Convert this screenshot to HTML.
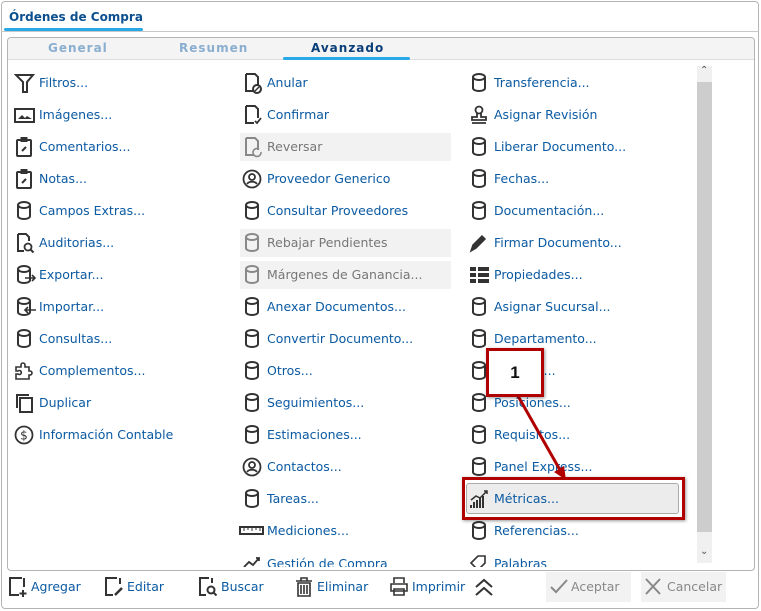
<!DOCTYPE html>
<html><head><meta charset="utf-8"><style>
*{margin:0;padding:0;box-sizing:border-box}
body{width:761px;height:611px;background:#fff;font-family:"DejaVu Sans","Liberation Sans",sans-serif;font-size:12.5px;color:#0b5aa2;position:relative;overflow:hidden}
.abs{position:absolute}
.outer{left:1px;top:1px;width:758px;height:608px;border:1px solid #b4b4b4;border-radius:4px;background:#fff}
.inner{left:7px;top:37px;width:748px;height:534px;border:1px solid #b4b4b4;border-radius:4px;overflow:hidden}
.it{position:absolute;height:22px;line-height:22px;white-space:nowrap;margin-top:0px}
.it svg{position:absolute;left:-1px;top:0}
.it span{position:absolute;left:24px;top:0}
.dis{background:#f2f2f2}
.dis span{color:#777}
.tb{position:absolute;top:576px;height:22px;line-height:22px;white-space:nowrap}
.tb span{position:absolute;left:23px}
</style></head><body>
<svg width="0" height="0" style="position:absolute">
<defs>
<g id="cyl" fill="none" stroke="#333" stroke-width="2"><ellipse cx="10" cy="5" rx="6" ry="3"/><path d="M4 5v11c0 2 3 3 6 3s6-1 6-3V5"/></g>
<g id="doc" fill="none" stroke="#333" stroke-width="2"><path d="M4 2h9l3 3v9M4 2v17h8"/></g>
<g id="clip" fill="none" stroke="#333" stroke-width="2"><rect x="3" y="4" width="14" height="16" rx="1"/><rect x="7.5" y="2" width="5" height="3" fill="#333"/><path d="M8 15l4-4"/></g>
<g id="person" fill="none" stroke="#333" stroke-width="1.8"><circle cx="10" cy="11" r="8.5"/><circle cx="10" cy="9" r="3"/><path d="M5 16c2-3 8-3 10 0"/></g>
</defs></svg>

<div class="abs outer"></div>
<div class="abs" style="left:9px;top:10px;font-weight:bold;color:#0b4f8f;font-size:12px">Órdenes de Compra</div>
<div class="abs" style="left:4px;top:28px;width:139px;height:3px;background:#29a8e8;border-radius:2px"></div>
<div class="abs" style="left:1px;top:31px;width:758px;height:1px;background:#c8c8c8"></div>

<div class="abs inner">
 <div class="abs" style="left:0;top:0;width:748px;height:22px;background:#f4f4f4;border-bottom:1px solid #ddd"></div>
 <div class="abs" style="left:40px;top:3px;font-weight:bold;color:#8aaed0;letter-spacing:1px;font-size:12px">General</div>
 <div class="abs" style="left:171px;top:3px;font-weight:bold;color:#8aaed0;letter-spacing:1px;font-size:12px">Resumen</div>
 <div class="abs" style="left:303px;top:3px;font-weight:bold;color:#0b3f7a;letter-spacing:1px;font-size:12px">Avanzado</div>
 <div class="abs" style="left:275px;top:19px;width:127px;height:3px;background:#29a8e8;border-radius:2px"></div>
 <div class="abs" style="left:689px;top:28px;width:15px;height:497px;background:#f0f0f0"></div>
 <div class="abs" style="left:689px;top:44px;width:15px;height:450px;background:#cdcdcd"></div>
 <div class="abs" style="left:692px;top:27px;font-size:10px;color:#555">&#8963;</div>
 <div class="abs" style="left:692px;top:508px;font-size:10px;color:#555">&#8964;</div>
</div>

<!-- column 1 -->
<div class="it" style="left:15px;top:72px"><svg width="22" height="22"><path d="M2 3h17l-6 7v10h-4V10z" fill="none" stroke="#333" stroke-width="2"/></svg><span>Filtros...</span></div>
<div class="it" style="left:15px;top:104px"><svg width="22" height="22"><rect x="1" y="5" width="19" height="13" fill="none" stroke="#333" stroke-width="2"/><path d="M4 15l4-4 3 3 2-2 5 3z" fill="#333"/></svg><span>Imágenes...</span></div>
<div class="it" style="left:15px;top:136px"><svg width="22" height="22"><use href="#clip"/></svg><span>Comentarios...</span></div>
<div class="it" style="left:15px;top:168px"><svg width="22" height="22"><use href="#clip"/></svg><span>Notas...</span></div>
<div class="it" style="left:15px;top:200px"><svg width="22" height="22"><use href="#cyl"/></svg><span>Campos Extras...</span></div>
<div class="it" style="left:15px;top:232px"><svg width="22" height="22"><path d="M4 2h8l3 3v4M4 2v17h6" fill="none" stroke="#333" stroke-width="2"/><circle cx="14" cy="15" r="3.5" fill="none" stroke="#333" stroke-width="1.8"/><path d="M16.5 17.5l3 3" stroke="#333" stroke-width="2"/></svg><span>Auditorias...</span></div>
<div class="it" style="left:15px;top:264px"><svg width="22" height="22"><use href="#cyl"/><path d="M11 14h10m-3-3l3 3-3 3" fill="none" stroke="#333" stroke-width="1.6"/></svg><span>Exportar...</span></div>
<div class="it" style="left:15px;top:296px"><svg width="22" height="22"><use href="#cyl"/><path d="M22 14H11m3-3l-3 3 3 3" fill="none" stroke="#333" stroke-width="1.6"/></svg><span>Importar...</span></div>
<div class="it" style="left:15px;top:328px"><svg width="22" height="22"><use href="#cyl"/></svg><span>Consultas...</span></div>
<div class="it" style="left:15px;top:360px"><svg width="22" height="22"><path d="M2 19v-5h2a2 2 0 100-3H2V7h5V5a2 2 0 114 0v2h4v4h1a2 2 0 110 4h-1v4z" fill="none" stroke="#333" stroke-width="1.6"/></svg><span>Complementos...</span></div>
<div class="it" style="left:15px;top:392px"><svg width="22" height="22"><path d="M3 16V3h12" fill="none" stroke="#333" stroke-width="2"/><rect x="6" y="6" width="12" height="14" fill="none" stroke="#333" stroke-width="2"/></svg><span>Duplicar</span></div>
<div class="it" style="left:15px;top:424px"><svg width="22" height="22"><circle cx="10" cy="11" r="8.5" fill="none" stroke="#333" stroke-width="1.8"/><text x="10" y="15.5" font-size="12" text-anchor="middle" fill="#333" font-family="DejaVu Sans">$</text></svg><span>Información Contable</span></div>

<!-- column 2 -->
<div class="it" style="left:243px;top:72px"><svg width="22" height="22"><use href="#doc"/><circle cx="15" cy="17" r="4" fill="none" stroke="#333" stroke-width="2"/><path d="M13 19l4-4" stroke="#333" stroke-width="1.5"/></svg><span>Anular</span></div>
<div class="it" style="left:243px;top:104px"><svg width="22" height="22"><use href="#doc"/><path d="M13 17l2 2 4-5" fill="none" stroke="#333" stroke-width="1.8"/></svg><span>Confirmar</span></div>
<div class="abs dis" style="left:240px;top:133px;width:211px;height:28px"></div>
<div class="it dis" style="left:243px;top:136px;background:none"><svg width="22" height="22" opacity=".55"><use href="#doc"/><path d="M19 16a4 4 0 11-2-3" fill="none" stroke="#333" stroke-width="1.6"/></svg><span>Reversar</span></div>
<div class="it" style="left:243px;top:168px"><svg width="22" height="22"><use href="#person"/></svg><span>Proveedor Generico</span></div>
<div class="it" style="left:243px;top:200px"><svg width="22" height="22"><use href="#cyl"/></svg><span>Consultar Proveedores</span></div>
<div class="abs dis" style="left:240px;top:229px;width:211px;height:28px"></div>
<div class="it dis" style="left:243px;top:232px;background:none"><svg width="22" height="22" opacity=".55"><use href="#cyl"/></svg><span>Rebajar Pendientes</span></div>
<div class="abs dis" style="left:240px;top:261px;width:211px;height:28px"></div>
<div class="it dis" style="left:243px;top:264px;background:none"><svg width="22" height="22" opacity=".55"><use href="#cyl"/></svg><span>Márgenes de Ganancia...</span></div>
<div class="it" style="left:243px;top:296px"><svg width="22" height="22"><use href="#cyl"/></svg><span>Anexar Documentos...</span></div>
<div class="it" style="left:243px;top:328px"><svg width="22" height="22"><use href="#cyl"/></svg><span>Convertir Documento...</span></div>
<div class="it" style="left:243px;top:360px"><svg width="22" height="22"><use href="#cyl"/></svg><span>Otros...</span></div>
<div class="it" style="left:243px;top:392px"><svg width="22" height="22"><use href="#cyl"/></svg><span>Seguimientos...</span></div>
<div class="it" style="left:243px;top:424px"><svg width="22" height="22"><use href="#cyl"/></svg><span>Estimaciones...</span></div>
<div class="it" style="left:243px;top:456px"><svg width="22" height="22"><use href="#person"/></svg><span>Contactos...</span></div>
<div class="it" style="left:243px;top:488px"><svg width="22" height="22"><use href="#cyl"/></svg><span>Tareas...</span></div>
<div class="it" style="left:240px;top:520px"><svg width="26" height="22"><rect x="1" y="7" width="23" height="7" fill="none" stroke="#333" stroke-width="2"/><path d="M5 8v3M9 8v2M13 8v3M17 8v2M21 8v3" stroke="#333"/></svg><span style="left:27px">Mediciones...</span></div>
<div class="abs" style="left:240px;top:548px;width:215px;height:19px;overflow:hidden"><div class="it" style="left:3px;top:5px"><svg width="22" height="22"><path d="M2 14l5-5 4 3 6-7m-3 0h3v3" fill="none" stroke="#333" stroke-width="1.8"/></svg><span>Gestión de Compra</span></div></div>

<!-- column 3 -->
<div class="it" style="left:470px;top:72px"><svg width="22" height="22"><use href="#cyl"/></svg><span>Transferencia...</span></div>
<div class="it" style="left:470px;top:104px"><svg width="22" height="22"><circle cx="10" cy="6" r="3.5" fill="none" stroke="#333" stroke-width="1.8"/><path d="M8 9v4H3v3h14v-3h-5V9M3 19h14" fill="none" stroke="#333" stroke-width="1.8"/></svg><span>Asignar Revisión</span></div>
<div class="it" style="left:470px;top:136px"><svg width="22" height="22"><use href="#cyl"/></svg><span>Liberar Documento...</span></div>
<div class="it" style="left:470px;top:168px"><svg width="22" height="22"><use href="#cyl"/></svg><span>Fechas...</span></div>
<div class="it" style="left:470px;top:200px"><svg width="22" height="22"><use href="#cyl"/></svg><span>Documentación...</span></div>
<div class="it" style="left:470px;top:232px"><svg width="22" height="22"><path d="M2 19l2-6 9-9 3 3-9 9z M12 5l3 3" fill="#333" stroke="#333" stroke-width="1.5"/></svg><span>Firmar Documento...</span></div>
<div class="it" style="left:470px;top:264px"><svg width="22" height="22"><path d="M1 3h6v4H1zM9 3h11v4H9zM1 9h6v4H1zM9 9h11v4H9zM1 15h6v4H1zM9 15h11v4H9z" fill="#333"/></svg><span>Propiedades...</span></div>
<div class="it" style="left:470px;top:296px"><svg width="22" height="22"><use href="#cyl"/></svg><span>Asignar Sucursal...</span></div>
<div class="it" style="left:470px;top:328px"><svg width="22" height="22"><use href="#cyl"/></svg><span>Departamento...</span></div>
<div class="it" style="left:470px;top:360px"><svg width="22" height="22"><use href="#cyl"/></svg><span>Moneda...</span></div>
<div class="it" style="left:470px;top:392px"><svg width="22" height="22"><use href="#cyl"/></svg><span>Posiciones...</span></div>
<div class="it" style="left:470px;top:424px"><svg width="22" height="22"><use href="#cyl"/></svg><span>Requisitos...</span></div>
<div class="it" style="left:470px;top:456px"><svg width="22" height="22"><use href="#cyl"/></svg><span>Panel Express...</span></div>
<div class="abs" style="left:466px;top:483px;width:213px;height:31px;background:#ececec;border:1px solid #aaa;border-radius:3px"></div>
<div class="it" style="left:470px;top:488px"><svg width="22" height="22"><path d="M2 17v3M5 14v6M8 12v8M11 10v10M14 8v12" stroke="#333" stroke-width="2"/><path d="M2 12l5-4 4 2 7-7m-3 0h3v3" fill="none" stroke="#333" stroke-width="1.5"/></svg><span>Métricas...</span></div>
<div class="it" style="left:470px;top:520px"><svg width="22" height="22"><use href="#cyl"/></svg><span>Referencias...</span></div>
<div class="abs" style="left:466px;top:548px;width:220px;height:19px;overflow:hidden"><div class="it" style="left:4px;top:5px"><svg width="22" height="22"><path d="M2 10l7-7h7v7l-7 7z" fill="none" stroke="#333" stroke-width="1.6"/></svg><span>Palabras</span></div></div>

<!-- annotation -->
<div class="abs" style="left:462px;top:477px;width:223px;height:43px;border:3px solid #b00000;box-shadow:1px 1px 3px rgba(0,0,0,.4)"></div>
<svg class="abs" style="left:0;top:0" width="761" height="611"><path d="M518 396L560 470" stroke="#b00000" stroke-width="3"/><path d="M566 480l-12-8 10-6z" fill="#b00000"/></svg>
<div class="abs" style="left:486px;top:348px;width:58px;height:49px;background:#fff;border:3px solid #b00000;box-shadow:1px 1px 3px rgba(0,0,0,.4);font-family:'Liberation Sans',sans-serif;font-weight:bold;font-size:17px;color:#111;text-align:center;line-height:43px">1</div>

<!-- toolbar -->
<div class="tb" style="left:8px;width:80px"><svg width="22" height="22"><path d="M14 2H2v17h9M16 2v9" fill="none" stroke="#333" stroke-width="2"/><path d="M15 14v7M11.5 17.5h7" stroke="#333" stroke-width="2"/></svg><span>Agregar</span></div>
<div class="tb" style="left:104px;width:70px"><svg width="22" height="22"><path d="M13 2H2v17h7M16 2v6" fill="none" stroke="#333" stroke-width="2"/><path d="M11 19l7-7" stroke="#333" stroke-width="2.5"/></svg><span>Editar</span></div>
<div class="tb" style="left:198px;width:70px"><svg width="22" height="22"><path d="M11 2H2v17h6M14 2v5" fill="none" stroke="#333" stroke-width="2"/><circle cx="13" cy="14" r="3.5" fill="none" stroke="#333" stroke-width="2"/><path d="M15.5 16.5l3 3" stroke="#333" stroke-width="2"/></svg><span>Buscar</span></div>
<div class="tb" style="left:294px;width:80px"><svg width="22" height="22"><path d="M2 5h16M7 5V2h6v3M4 7h12v13H4zM7 9v9M10 9v9M13 9v9" fill="none" stroke="#333" stroke-width="1.6"/></svg><span>Eliminar</span></div>
<div class="tb" style="left:389px;width:80px"><svg width="22" height="22"><path d="M5 7V2h10v5M2 8h16v7H2zM5 13h10v6H5z" fill="none" stroke="#333" stroke-width="1.6"/></svg><span>Imprimir</span></div>
<svg class="abs" style="left:474px;top:578px" width="22" height="20"><path d="M2 9l8-7 8 7M2 17l8-7 8 7" fill="none" stroke="#333" stroke-width="2"/></svg>
<div class="abs" style="left:546px;top:572px;width:85px;height:30px;background:#f2f2f2"></div>
<div class="tb" style="left:549px;color:#888"><svg width="22" height="22"><path d="M2 11l5 5 11-12" fill="none" stroke="#888" stroke-width="2"/></svg><span style="left:22px">Aceptar</span></div>
<div class="abs" style="left:641px;top:572px;width:85px;height:30px;background:#f2f2f2"></div>
<div class="tb" style="left:643px;color:#888"><svg width="22" height="22"><path d="M3 3l14 15M17 3L3 18" fill="none" stroke="#888" stroke-width="2"/></svg><span style="left:24px">Cancelar</span></div>
</body></html>
